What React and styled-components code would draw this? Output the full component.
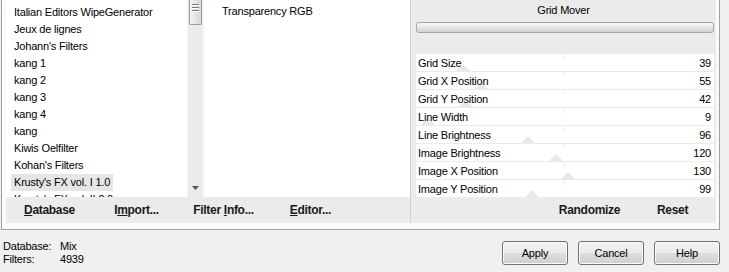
import React from 'react';
import styled, { createGlobalStyle } from 'styled-components';

const GlobalStyle = createGlobalStyle`
  body {
    margin: 0;
    background: #f0f0f0;
    font-family: "Liberation Sans", Arial, sans-serif;
    font-size: 11px;
    letter-spacing: -0.2px;
    color: #000;
  }
`;

const filters = [
  'Italian Editors WipeGenerator',
  'Jeux de lignes',
  "Johann's Filters",
  'kang 1',
  'kang 2',
  'kang 3',
  'kang 4',
  'kang',
  'Kiwis Oelfilter',
  "Kohan's Filters",
  "Krusty's FX vol. I 1.0",
  "Krusty's FX vol. II 2.0",
];

const params = [
  { label: 'Grid Size', value: 39 },
  { label: 'Grid X Position', value: 55 },
  { label: 'Grid Y Position', value: 42 },
  { label: 'Line Width', value: 9 },
  { label: 'Line Brightness', value: 96 },
  { label: 'Image Brightness', value: 120 },
  { label: 'Image X Position', value: 130 },
  { label: 'Image Y Position', value: 99 },
];

const Window = styled.div`
  width: 729px;
  height: 272px;
  overflow: hidden;
  display: flex;
  flex-direction: column;
`;

const Frame = styled.div`
  box-sizing: border-box;
  margin-left: 1px;
  width: 719px;
  height: 230px;
  border: 1px solid #a0a0a0;
  border-top: none;
  background: #fafafa;
  padding: 0 2px 6px 4px;
  display: flex;
`;

const LeftColumn = styled.div`
  width: 404px;
  display: flex;
  flex-direction: column;
`;

const ListsRow = styled.div`
  height: 197px;
  display: flex;
  overflow: hidden;
`;

const ListBox = styled.div`
  width: ${p => p.$width}px;
  background: #fff;
  overflow: hidden;
  padding: ${p => p.$top}px 0 0 ${p => p.$indent}px;
  box-sizing: border-box;
`;

const Item = styled.div`
  height: 17px;
  line-height: 17px;
  white-space: nowrap;
  display: flex;
`;

const ItemText = styled.span`
  padding: 0 3px;
  background: ${p => (p.$selected ? '#e6e6e6' : 'transparent')};
`;

const Scrollbar = styled.div`
  width: 16px;
  background: #ebebeb;
  border-left: 1px solid #f4f4f4;
  box-sizing: border-box;
  display: flex;
  flex-direction: column;
  justify-content: space-between;
  margin-right: 2px;
`;

const Thumb = styled.div`
  margin: 0 1px;
  height: 25px;
  box-sizing: border-box;
  border: 1px solid #9a9a9a;
  border-top: none;
  border-radius: 0 0 2px 2px;
  background: linear-gradient(to right, #f6f6f6, #e2e2e2 60%, #d6d6d6);
  display: flex;
  flex-direction: column;
  align-items: center;
  padding-top: 4px;
  gap: 2px;
`;

const Grip = styled.div`
  width: 7px;
  height: 1px;
  background: #7a7a7a;
  box-shadow: 0 1px 0 #fff;
`;

const ArrowBox = styled.div`
  height: 18px;
  display: flex;
  align-items: center;
  justify-content: center;
`;

const ButtonBar = styled.div`
  height: 26px;
  background: #ebebeb;
  display: flex;
  justify-content: ${p => (p.$right ? 'flex-end' : 'flex-start')};
  padding-right: ${p => (p.$right ? '2px' : '0')};
`;

const FlatButton = styled.div`
  width: ${p => p.$width}px;
  display: flex;
  align-items: center;
  justify-content: center;
  font-weight: bold;
  font-size: 12px;
  letter-spacing: -0.3px;
  color: #1a1a1a;
`;

const RightPanel = styled.div`
  width: 306px;
  border-left: 1px solid #cfcfcf;
  background: #ebebeb;
  box-sizing: border-box;
  display: flex;
  flex-direction: column;
`;

const Title = styled.div`
  height: 22px;
  line-height: 20px;
  text-align: center;
`;

const ProgressBar = styled.div`
  height: 11px;
  margin: 0 2px 21px 5px;
  box-sizing: border-box;
  border: 1px solid #a6a6a6;
  border-radius: 3px;
  background: linear-gradient(#f8f8f8, #e6e6e6 50%, #d2d2d2);
`;

const Rows = styled.div`
  display: flex;
  flex-direction: column;
  gap: 1px;
  padding: 0 2px 0 5px;
  height: 143px;
`;

const ParamRow = styled.div`
  position: relative;
  height: 17px;
  background: #fff;
  display: flex;
  align-items: center;
  justify-content: space-between;
  padding: 0 3px 0 2px;
  overflow: hidden;
`;

const Tick = styled.div`
  position: absolute;
  left: 148px;
  top: 0;
  width: 1px;
  height: 5px;
  background: #ececec;
`;

const ThumbMark = styled.svg`
  position: absolute;
  bottom: 0;
`;

const Label = styled.span`
  position: relative;
`;

const Footer = styled.div`
  flex: 1;
  display: flex;
  justify-content: space-between;
  padding: 10px 9px 0 3px;
`;

const Info = styled.div`
  display: grid;
  grid-template-columns: 57px auto;
  line-height: 13px;
  align-content: start;
`;

const Buttons = styled.div`
  display: flex;
  gap: 10px;
  padding-top: 1px;
`;

const PushButton = styled.button`
  width: 66px;
  height: 24px;
  box-sizing: border-box;
  border: 1px solid #707070;
  border-radius: 3px;
  background: linear-gradient(#f2f2f2, #ebebeb 50%, #dddddd 51%, #cfcfcf);
  box-shadow: inset 0 0 0 1px #fbfbfb;
  font-family: "Liberation Sans", Arial, sans-serif;
  font-size: 11px;
  letter-spacing: -0.2px;
  color: #000;
  padding: 0;
`;

const FilterList = () => (
  <ListBox $width={181} $top={4} $indent={5}>
    {filters.map(name => (
      <Item key={name}>
        <ItemText $selected={name === "Krusty's FX vol. I 1.0"}>{name}</ItemText>
      </Item>
    ))}
  </ListBox>
);

const EffectList = () => (
  <ListBox $width={205} $top={0} $indent={14}>
    <div style={{ marginTop: '-14px' }}>
      <Item><ItemText>Transparency Grayscale</ItemText></Item>
      <Item><ItemText>Transparency RGB</ItemText></Item>
    </div>
  </ListBox>
);

const ListScroll = () => (
  <Scrollbar>
    <Thumb>
      <Grip /><Grip /><Grip />
    </Thumb>
    <ArrowBox>
      <svg width="7" height="4" viewBox="0 0 7 4">
        <path d="M0 0h7L3.5 4z" fill="#555" />
      </svg>
    </ArrowBox>
  </Scrollbar>
);

const SliderRow = ({ label, value }) => (
  <ParamRow>
    <Tick />
    <ThumbMark width="14" height="7" viewBox="0 0 14 7" style={{ left: `${value * 1.15 - 5}px` }}>
      <path d="M0 7L7 0l7 7z" fill="#e9e9e9" />
    </ThumbMark>
    <Label>{label}</Label>
    <Label>{value}</Label>
  </ParamRow>
);

export default function App() {
  return (
    <Window>
      <GlobalStyle />
      <Frame>
        <LeftColumn>
          <ListsRow>
            <FilterList />
            <ListScroll />
            <EffectList />
          </ListsRow>
          <ButtonBar>
            <FlatButton $width={87}><span><u>D</u>atabase</span></FlatButton>
            <FlatButton $width={87}><span>I<u>m</u>port...</span></FlatButton>
            <FlatButton $width={87}><span>Filter <u>I</u>nfo...</span></FlatButton>
            <FlatButton $width={87}><span><u>E</u>ditor...</span></FlatButton>
          </ButtonBar>
        </LeftColumn>
        <RightPanel>
          <Title>Grid Mover</Title>
          <ProgressBar />
          <Rows>
            {params.map(p => (
              <SliderRow key={p.label} label={p.label} value={p.value} />
            ))}
          </Rows>
          <ButtonBar $right>
            <FlatButton $width={83}>Randomize</FlatButton>
            <FlatButton $width={83}>Reset</FlatButton>
          </ButtonBar>
        </RightPanel>
      </Frame>
      <Footer>
        <Info>
          <span>Database:</span><span>Mix</span>
          <span>Filters:</span><span>4939</span>
        </Info>
        <Buttons>
          <PushButton>Apply</PushButton>
          <PushButton>Cancel</PushButton>
          <PushButton>Help</PushButton>
        </Buttons>
      </Footer>
    </Window>
  );
}
